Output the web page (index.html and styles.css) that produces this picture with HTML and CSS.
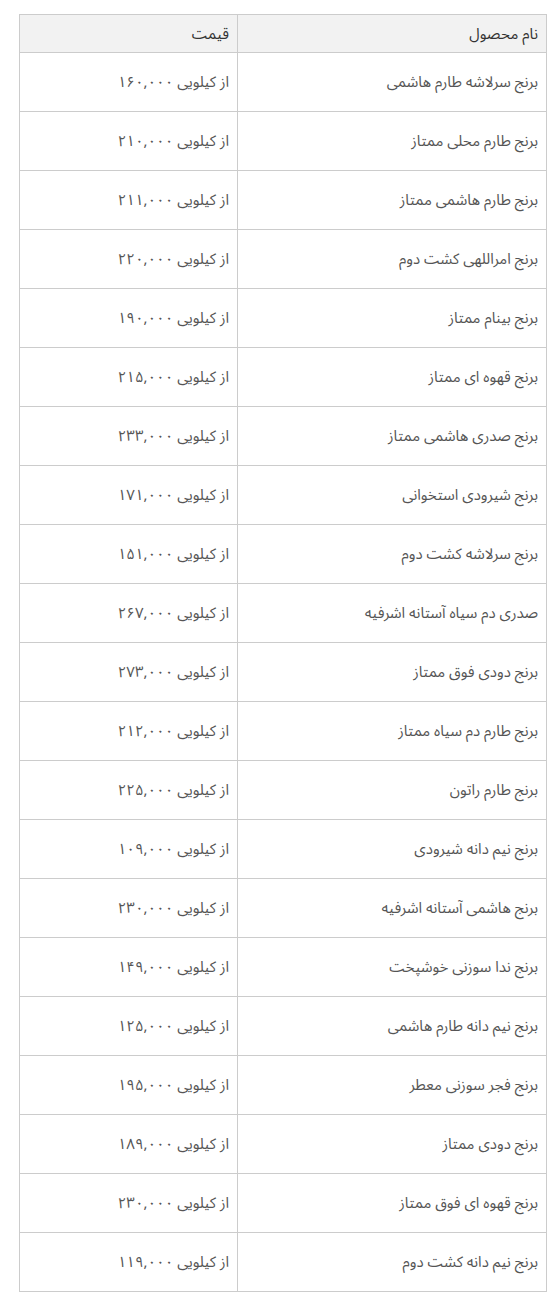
FILE: index.html
```html
<!DOCTYPE html>
<html lang="fa" dir="rtl">
<head>
<meta charset="utf-8">
<title>قیمت برنج</title>
<link rel="stylesheet" href="styles.css">
</head>
<body>
<div class="wrap">
<table class="prices">
<thead>
<tr><th class="name">نام محصول</th><th class="price">قیمت</th></tr>
</thead>
<tbody>
<tr><td>برنج سرلاشه طارم هاشمی</td><td>از کیلویی ۱۶۰,۰۰۰</td></tr>
<tr><td>برنج طارم محلی ممتاز</td><td>از کیلویی ۲۱۰,۰۰۰</td></tr>
<tr><td>برنج طارم هاشمی ممتاز</td><td>از کیلویی ۲۱۱,۰۰۰</td></tr>
<tr><td>برنج امراللهی کشت دوم</td><td>از کیلویی ۲۲۰,۰۰۰</td></tr>
<tr><td>برنج بینام ممتاز</td><td>از کیلویی ۱۹۰,۰۰۰</td></tr>
<tr><td>برنج قهوه ای ممتاز</td><td>از کیلویی ۲۱۵,۰۰۰</td></tr>
<tr><td>برنج صدری هاشمی ممتاز</td><td>از کیلویی ۲۳۳,۰۰۰</td></tr>
<tr><td>برنج شیرودی استخوانی</td><td>از کیلویی ۱۷۱,۰۰۰</td></tr>
<tr><td>برنج سرلاشه کشت دوم</td><td>از کیلویی ۱۵۱,۰۰۰</td></tr>
<tr><td>صدری دم سیاه آستانه اشرفیه</td><td>از کیلویی ۲۶۷,۰۰۰</td></tr>
<tr><td>برنج دودی فوق ممتاز</td><td>از کیلویی ۲۷۳,۰۰۰</td></tr>
<tr><td>برنج طارم دم سیاه ممتاز</td><td>از کیلویی ۲۱۲,۰۰۰</td></tr>
<tr><td>برنج طارم راتون</td><td>از کیلویی ۲۲۵,۰۰۰</td></tr>
<tr><td>برنج نیم دانه شیرودی</td><td>از کیلویی ۱۰۹,۰۰۰</td></tr>
<tr><td>برنج هاشمی آستانه اشرفیه</td><td>از کیلویی ۲۳۰,۰۰۰</td></tr>
<tr><td>برنج ندا سوزنی خوشپخت</td><td>از کیلویی ۱۴۹,۰۰۰</td></tr>
<tr><td>برنج نیم دانه طارم هاشمی</td><td>از کیلویی ۱۲۵,۰۰۰</td></tr>
<tr><td>برنج فجر سوزنی معطر</td><td>از کیلویی ۱۹۵,۰۰۰</td></tr>
<tr><td>برنج دودی ممتاز</td><td>از کیلویی ۱۸۹,۰۰۰</td></tr>
<tr><td>برنج قهوه ای فوق ممتاز</td><td>از کیلویی ۲۳۰,۰۰۰</td></tr>
<tr><td>برنج نیم دانه کشت دوم</td><td>از کیلویی ۱۱۹,۰۰۰</td></tr>
</tbody>
</table>
</div>
</body>
</html>
```
FILE: styles.css
```css
html, body {
  margin: 0;
  padding: 0;
  background: #ffffff;
}
body {
  font-family: "Noto Sans Arabic", "Noto Naskh Arabic", "DejaVu Sans", sans-serif;
  color: #555555;
  font-size: 15px;
}
.wrap {
  padding: 14px 8px 0 0;
  display: flex;
  justify-content: flex-start;
}
.prices {
  border-collapse: collapse;
  width: 527px;
  table-layout: fixed;
}
.prices th,
.prices td {
  box-sizing: border-box;
  border: 1px solid #cccccc;
  text-align: right;
  vertical-align: middle;
  padding: 0 8px;
  font-weight: normal;
}
.prices th {
  background: #f2f2f2;
  height: 38px;
  color: #333333;
}
.prices td {
  height: 59px;
}
.prices .name {
  width: 309px;
}
.prices .price {
  width: 218px;
}
```
